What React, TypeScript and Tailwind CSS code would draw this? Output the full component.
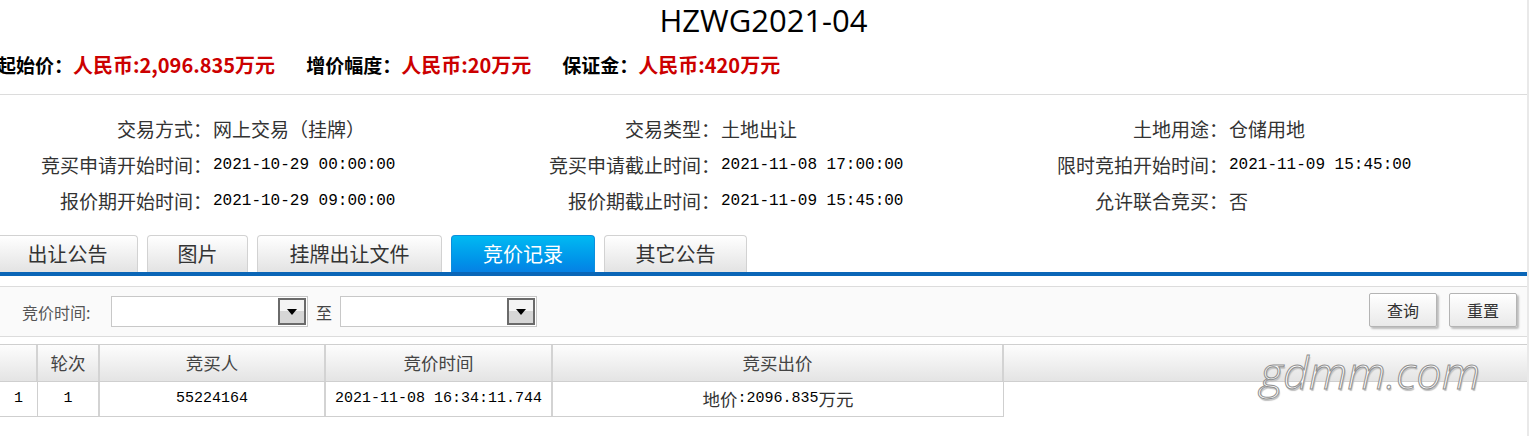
import React from 'react';

const cjk = "font-['Noto_Sans_CJK_SC',sans-serif]";
const mono = "font-['Liberation_Mono','Noto_Sans_CJK_SC',monospace]";

const infoRows: [string, string, boolean][][] = [
  [
    ['交易方式：', '网上交易（挂牌）', false],
    ['交易类型：', '土地出让', false],
    ['土地用途：', '仓储用地', false],
  ],
  [
    ['竞买申请开始时间：', '2021-10-29 00:00:00', true],
    ['竞买申请截止时间：', '2021-11-08 17:00:00', true],
    ['限时竞拍开始时间：', '2021-11-09 15:45:00', true],
  ],
  [
    ['报价期开始时间：', '2021-10-29 09:00:00', true],
    ['报价期截止时间：', '2021-11-09 15:45:00', true],
    ['允许联合竞买：', '否', false],
  ],
];

const tabs = [
  { label: '出让公告', w: 'w-[141px]' },
  { label: '图片', w: 'w-[101px]' },
  { label: '挂牌出让文件', w: 'w-[185px]' },
  { label: '竞价记录', w: 'w-[144px]', active: true },
  { label: '其它公告', w: 'w-[143px]' },
];

// select box with the old-style dropdown button
function DateSelect() {
  return (
    <div className="relative w-[197px] h-[31px] border border-[#c8c8c8] bg-white">
      <div className="absolute right-[1px] top-[1px] w-[28px] h-[27px] border-2 border-[#6a6a6a] bg-linear-to-b from-[#f4f4f4] from-50% to-[#d6d6d6] to-50% flex items-center justify-center">
        <div className="w-0 h-0 border-l-[5px] border-r-[5px] border-t-[6px] border-l-transparent border-r-transparent border-t-black" />
      </div>
    </div>
  );
}

function Price({ label, value }: { label: string; value: string }) {
  return (
    <span className="whitespace-nowrap flex items-center">
      <span className="text-black text-[19px]">{label}</span>
      <span className="text-[#cc0000] text-[20px]">{value}</span>
    </span>
  );
}

export default function App() {
  return (
    <div className="flex w-[1529px] h-[436px] bg-white">
      <div className="relative w-[1527px] flex flex-col">
        {/* Title */}
        <div className="h-[40px] flex justify-center items-center font-['Open_Sans',sans-serif] text-[31px] leading-[40px] text-black">
          HZWG2021-04
        </div>

        {/* Price line */}
        <div className={`h-[50px] -ml-[3px] flex items-center gap-[31px] font-bold ${cjk}`}>
          <Price label="起始价：" value="人民币:2,096.835万元" />
          <Price label="增价幅度：" value="人民币:20万元" />
          <Price label="保证金：" value="人民币:420万元" />
        </div>

        <div className="h-px bg-[#dcdcdc] mt-[4px]" />

        {/* Info grid */}
        <div className={`pt-[16px] grid grid-cols-[212px_296px_212px_296px_212px_1fr] text-[19px] text-[#333] ${cjk}`}>
          {infoRows.map((row, ri) =>
            row.map(([label, value, isMono], ci) => (
              <React.Fragment key={`${ri}-${ci}`}>
                <div className="h-[36px] flex items-center justify-end whitespace-nowrap">{label}</div>
                <div className={`h-[36px] flex items-center whitespace-nowrap pl-[1px] ${isMono ? `${mono} text-[16px] text-black` : ''}`}>
                  {value}
                </div>
              </React.Fragment>
            ))
          )}
        </div>

        {/* Tabs */}
        <div className={`mt-[16px] -ml-[3px] flex gap-[9px] items-end ${cjk}`}>
          {tabs.map((t) => (
            <div
              key={t.label}
              className={`${t.w} h-[37px] rounded-t-[4px] border border-b-0 flex items-center justify-center text-[20px] ${
                t.active
                  ? 'bg-linear-to-b from-[#00b9f2] to-[#0681e4] border-[#0b8fdc] text-white'
                  : 'bg-linear-to-b from-white to-[#e3e3e3] border-[#d2d2d2] text-[#333]'
              }`}
            >
              {t.label}
            </div>
          ))}
        </div>
        <div className="h-[4px] bg-[#0a66b7]" />

        <div className="h-[10px]" />

        {/* Filter bar */}
        <div className={`h-[51px] border-t border-b border-[#dcdcdc] bg-[#fafafa] flex items-center pl-[22px] pr-[10px] text-[16px] text-[#555] ${cjk}`}>
          <span className="w-[89px] whitespace-nowrap">竞价时间:</span>
          <DateSelect />
          <span className="mx-[8px] text-[#444]">至</span>
          <DateSelect />
          <div className="ml-auto flex gap-[12px] -mt-[3px]">
            {['查询', '重置'].map((b) => (
              <div
                key={b}
                className="w-[68px] h-[34px] border border-[#b4b4b4] rounded-[2px] bg-linear-to-b from-white to-[#e9e9e9] shadow-[2px_2px_2px_#bdbdbd] flex items-center justify-center text-[#333]"
              >
                {b}
              </div>
            ))}
          </div>
        </div>

        <div className="h-[7px]" />

        {/* Table */}
        <div className={`text-[17.5px] text-[#444] ${cjk}`}>
          <div className="h-[38px] flex border-t border-b border-[#cfcfcf] bg-linear-to-b from-[#fdfdfd] to-[#e4e4e4]">
            <div className="w-[38px] border-r-2 border-[#d3d3d3]" />
            <div className="w-[62px] border-r-2 border-[#d3d3d3] flex items-center justify-center">轮次</div>
            <div className="w-[226px] border-r-2 border-[#d3d3d3] flex items-center justify-center">竞买人</div>
            <div className="w-[227px] border-r-2 border-[#d3d3d3] flex items-center justify-center">竞价时间</div>
            <div className="w-[451px] border-r-2 border-[#d3d3d3] flex items-center justify-center">竞买出价</div>
            <div className="flex-1" />
          </div>
          <div className="w-[1004px] h-[35px] flex border-b border-[#cfcfcf] text-black">
            <div className={`w-[38px] border-r border-[#cfcfcf] flex items-center justify-center ${mono} text-[15px]`}>1</div>
            <div className={`w-[62px] border-r-2 border-[#d3d3d3] flex items-center justify-center ${mono} text-[15px]`}>1</div>
            <div className={`w-[226px] border-r-2 border-[#d3d3d3] flex items-center justify-center ${mono} text-[15px]`}>55224164</div>
            <div className={`w-[227px] border-r-2 border-[#d3d3d3] flex items-center justify-center ${mono} text-[15px]`}>2021-11-08 16:34:11.744</div>
            <div className="w-[451px] border-r border-[#cfcfcf] flex items-center justify-center text-[#333]">
              地价<span className={`${mono} text-[15px] text-black`}>:2096.835</span>万元
            </div>
          </div>
        </div>

        {/* watermark */}
        <div className="absolute left-[1260px] top-[345px] font-['Open_Sans',sans-serif] italic font-light text-[45px] leading-[54px] text-white [-webkit-text-stroke:1px_#909090] [text-shadow:1px_2px_1px_#c0c0c0] select-none">
          gdmm.com
        </div>
      </div>
      <div className="w-[2px] bg-[#e9e9e9]" />
    </div>
  );
}
